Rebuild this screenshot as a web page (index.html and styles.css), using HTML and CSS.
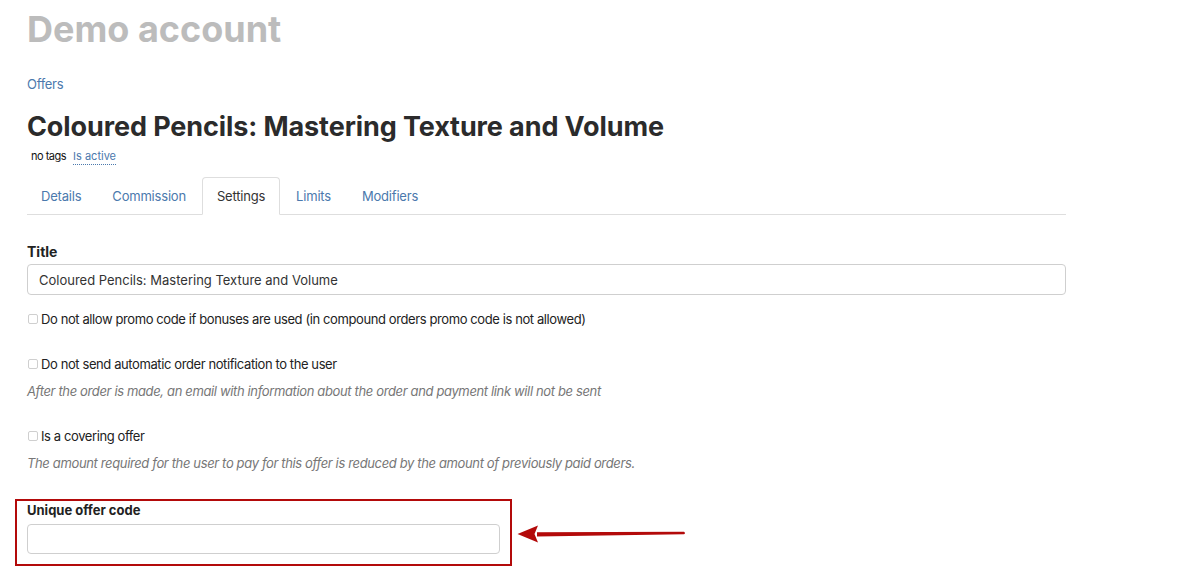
FILE: index.html
```html
<!DOCTYPE html>
<html lang="en">
<head>
<meta charset="utf-8">
<title>Demo account</title>
<link rel="stylesheet" href="styles.css">
</head>
<body>
<div class="page">
  <h1 class="account">Demo account</h1>
  <a class="crumb" href="#">Offers</a>
  <h2 class="offer-title">Coloured Pencils: Mastering Texture and Volume</h2>
  <div class="meta">
    <span class="tags">no tags</span>
    <a class="status" href="#">Is active</a>
  </div>
  <ul class="tabs">
    <li class="tab"><a href="#">Details</a></li>
    <li class="tab"><a href="#">Commission</a></li>
    <li class="tab active"><a href="#">Settings</a></li>
    <li class="tab"><a href="#">Limits</a></li>
    <li class="tab"><a href="#">Modifiers</a></li>
  </ul>

  <div class="field">
    <label class="label">Title</label>
    <input class="input" type="text" value="Coloured Pencils: Mastering Texture and Volume">
  </div>

  <div class="check-group">
    <label class="check"><span class="box"></span>Do not allow promo code if bonuses are used (in compound orders promo code is not allowed)</label>
  </div>

  <div class="check-group">
    <label class="check"><span class="box"></span>Do not send automatic order notification to the user</label>
    <p class="help">After the order is made, an email with information about the order and payment link will not be sent</p>
  </div>

  <div class="check-group">
    <label class="check"><span class="box"></span>Is a covering offer</label>
    <p class="help">The amount required for the user to pay for this offer is reduced by the amount of previously paid orders.</p>
  </div>

  <div class="highlight-row">
    <div class="highlight">
      <label class="label small">Unique offer code</label>
      <input class="input code" type="text" value="">
    </div>
    <svg class="arrow" width="170" height="20" viewBox="0 0 170 20">
      <path d="M20 8.3 L167 7.7 Q169 9 167 10.3 L20 12.5 Z" fill="#b30a0a"/>
      <path d="M0.5 10 L21 1.5 L17.5 10 L21 18.5 Z" fill="#b30a0a"/>
    </svg>
  </div>
</div>
</body>
</html>
```
FILE: styles.css
```css
* { box-sizing: border-box; }
html, body { margin: 0; padding: 0; background: #fff; }
body {
  font-family: Inter, "Noto Sans", sans-serif;
  color: #222;
}
.page {
  width: 1066px;
  padding: 6px 0 0 27px;
}
.account {
  margin: 0;
  font-size: 36px;
  font-weight: 700;
  color: #bcbcbc;
  line-height: 46px;
}
.crumb {
  display: block;
  margin-top: 23px;
  font-size: 13px;
  line-height: 18px;
  color: #4b79ad;
  text-decoration: none;
  letter-spacing: -0.3px;
}
.offer-title {
  margin: 17px 0 0;
  font-size: 27px;
  font-weight: 700;
  line-height: 34px;
  color: #2b2b2b;
  letter-spacing: -0.1px;
}
.meta {
  display: flex;
  gap: 7px;
  margin: 4px 0 0 4px;
  font-size: 11px;
  line-height: 16px;
}
.tags { color: #111; letter-spacing: -0.5px; }
.status {
  color: #4b79ad;
  text-decoration: none;
  border-bottom: 1px dotted #4b79ad;
}
.tabs {
  display: flex;
  list-style: none;
  margin: 12px 0 0;
  padding: 0;
  border-bottom: 1px solid #dedede;
}
.tab a {
  display: block;
  padding: 10px 14px 10px;
  font-size: 13px;
  line-height: 16px;
  color: #4b79ad;
  text-decoration: none;
  letter-spacing: -0.2px;
  border: 1px solid transparent;
  border-radius: 4px 4px 0 0;
  margin-bottom: -1px;
  margin-right: 1px;
}
.tab:first-child a { margin-left: -1px; }
.tab.active a {
  color: #333;
  border-color: #dedede #dedede #fff;
  background: #fff;
}
.field { margin-top: 28px; }
.label {
  display: block;
  font-size: 14px;
  font-weight: 700;
  line-height: 18px;
  color: #222;
  margin-bottom: 3px;
}
.label.small { font-size: 13px; margin-bottom: 5px; }
.input {
  display: block;
  width: 100%;
  height: 31px;
  padding: 0 11px;
  border: 1px solid #cfcfcf;
  border-radius: 4px;
  font-family: inherit;
  font-size: 13px;
  color: #333;
  background: #fff;
}
.check-group { margin-top: 15px; }
.check-group + .check-group { margin-top: 27px; }
.check {
  display: flex;
  align-items: center;
  font-size: 13px;
  line-height: 18px;
  color: #222;
  letter-spacing: -0.4px;
}
.box {
  width: 10px;
  height: 10px;
  border: 1px solid #cfcfcf;
  border-radius: 2px;
  margin: 0 3px 0 1px;
  flex: none;
}
.help {
  margin: 9px 0 0;
  font-size: 13px;
  line-height: 18px;
  font-style: italic;
  color: #777;
  letter-spacing: -0.36px;
}
.highlight-row {
  display: flex;
  align-items: center;
  margin: 27px 0 0 -12px;
}
.highlight {
  width: 497px;
  padding: 0 10px 10px 10px;
  border: 2px solid #b30a0a;
}
.input.code { height: 30px; }
.arrow { margin-left: 5px; margin-top: 2px; }
```
